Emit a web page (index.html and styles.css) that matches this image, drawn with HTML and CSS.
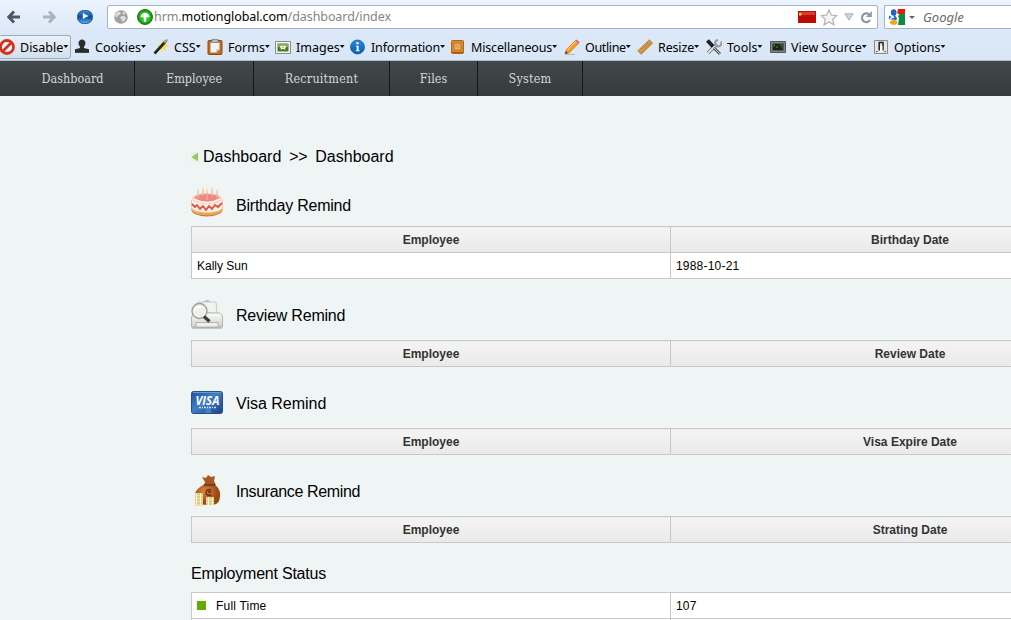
FILE: index.html
```html
<!DOCTYPE html>
<html lang="en">
<head>
<meta charset="utf-8">
<title>Dashboard</title>
<link rel="stylesheet" href="styles.css">
</head>
<body>
<svg class="defs" width="0" height="0">
  <defs>
    <linearGradient id="blue" x2="0" y2="1"><stop offset="0" stop-color="#3d8ed8"/><stop offset=".5" stop-color="#0d4c9b"/><stop offset="1" stop-color="#56b4f0"/></linearGradient>
    <linearGradient id="info" x2="0" y2="1"><stop offset="0" stop-color="#2d8be0"/><stop offset="1" stop-color="#0859b0"/></linearGradient>
    <radialGradient id="green"><stop offset="0" stop-color="#5fe04f"/><stop offset=".7" stop-color="#22b81a"/><stop offset="1" stop-color="#14800f"/></radialGradient>
    <linearGradient id="card" x2="1" y2="1"><stop offset="0" stop-color="#254f9b"/><stop offset=".45" stop-color="#3c80c8"/><stop offset="1" stop-color="#203f88"/></linearGradient>
    <linearGradient id="paper" x2="0" y2="1"><stop offset="0" stop-color="#fdfdfb"/><stop offset="1" stop-color="#cfcfca"/></linearGradient>
    <radialGradient id="bag" cx=".4" cy=".35"><stop offset="0" stop-color="#d9873e"/><stop offset="1" stop-color="#9c4a14"/></radialGradient>
    <linearGradient id="wood" x2="1" y2="1"><stop offset="0" stop-color="#efb566"/><stop offset="1" stop-color="#bd7427"/></linearGradient>
  </defs>
</svg>

<header class="browser">
  <div class="address-row">
    <div class="buttons">
      <svg width="14" height="14" viewBox="0 0 14 14"><path d="M7 1.5 1.8 7 7 12.5M2.5 7H13" fill="none" stroke="#4b5868" stroke-width="3"/></svg>
      <svg width="14" height="14" viewBox="0 0 14 14"><path d="M7 1.5 12.2 7 7 12.5M11.5 7H1" fill="none" stroke="#a9b4c0" stroke-width="3"/></svg>
      <svg width="16" height="14" viewBox="0 0 16 14"><rect x=".5" y=".5" width="15" height="13" rx="6" fill="url(#blue)" stroke="#275f9f"/><path d="M5.8 3 11.5 6 5.8 9z" fill="#fff"/></svg>
    </div>
    <div class="url-box">
      <svg width="14" height="14" viewBox="0 0 14 14"><circle cx="7" cy="7" r="6.8" fill="#a0a0a0"/><path d="M2 3 5 1.5 7 3 5.5 5 3.5 5.5 3 8 1 6zM7 6.5l3-.8 2 2-1.5 3L8 12l-.5-3-1.8-1zM9 1.5l3 2-2 1.3-1.5-1z" fill="#dedede"/></svg>
      <svg class="secure" width="16" height="16" viewBox="0 0 16 16"><circle cx="8" cy="8" r="7.5" fill="url(#green)" stroke="#168014"/><path d="M3.5 8.3a4.5 4.5 0 0 1 9 0H9.2v4.4H6.8V8.3z" fill="#fff"/></svg>
      <p class="url">hrm.<b>motionglobal.com</b>/dashboard/index</p>
      <svg class="flag" width="18" height="12" viewBox="0 0 18 12"><path fill="#bd0b08" d="M0 0h18v12H0z"/><path fill="#dc3d33" d="M1 1h16v3H1z"/><path fill="#ffd21f" d="M1 2h2.5v2.5H1z"/></svg>
      <svg class="star" width="18" height="17" viewBox="0 0 18 17"><path d="m9 1 2.3 5 5.5.6-4.1 3.7 1.2 5.5L9 13l-4.9 2.8 1.2-5.5L1.2 6.6 6.7 6z" fill="#f5f5f5" stroke="#b1b1b1" stroke-width="1.2"/></svg>
      <svg class="caret" width="10" height="8" viewBox="0 0 10 8"><path d="M.8.8h8.4L5 7.2z" fill="#cdd6df" stroke="#a5b1bd"/></svg>
      <svg width="12" height="13" viewBox="0 0 12 13"><path d="M10 9.2A4.4 4.4 0 1 1 9 3.2" fill="none" stroke="#8b97a5" stroke-width="2.2"/><path d="M11.8 0v6H6z" fill="#8b97a5"/></svg>
    </div>
    <div class="search-box">
      <svg width="16" height="16" viewBox="0 0 16 16"><path fill="#e5190f" d="M8 0h8v5l-5 1-3-2z"/><path fill="#078e3e" d="M8 16V8l3-3 5-.5V16z"/><path fill="#fff" d="M0 0h9L8 5l2 4-1 7H0z"/><ellipse cx="4.7" cy="3.5" rx="2.8" ry="3.2" fill="#1c62c9"/><path d="M5 6.5 6.5 9" stroke="#1c62c9" stroke-width="2"/><path d="M0 6.500 4.500 9 8 8.500 7.500 11 3 10.500 0 10z" fill="#1c62c9"/><path d="M1 9.500 5 7.800" stroke="#fff" stroke-width="1.300"/><ellipse cx="4.700" cy="13.400" rx="3.600" ry="2.300" fill="#f3a60f"/></svg>
      <svg class="mini" width="6" height="3" viewBox="0 0 6 3"><path d="M0 0h6L3 3z" fill="#666"/></svg>
      <span class="hint">Google</span>
    </div>
  </div>

  <div class="devbar">
    <div class="tool pressed"><svg viewBox="0 0 16 16"><circle cx="8" cy="8" r="6.500" fill="#fff" stroke="#d5321c" stroke-width="2.800"/><path d="m4 12 8-8" stroke="#d5321c" stroke-width="2.800"/></svg><span>Disable</span><i></i></div>
    <div class="tool"><svg viewBox="0 0 16 16"><path d="M8 .5a3.600 3.600 0 0 1 3.500 3.900C11.500 6.500 9.800 7 9.800 9l5.200 1.300V13H1v-2.700L6.200 9c0-2-1.700-2.500-1.700-4.600A3.600 3.600 0 0 1 8 .5z" fill="#2c2c2c"/><path d="M1 13.500h14" stroke="#444"/></svg><span>Cookies</span><i></i></div>
    <div class="tool"><svg viewBox="0 0 16 16"><path d="m9 0 1.500 3L14 2l-1 3.500 3 2-3.500 1 .5 3.500L10 10l-3 2 .5-4L4 6l4-1z" fill="#f9dc54"/><path d="M1.500 14.500 12.500 2.500" stroke="#242424" stroke-width="2.600"/><path d="m11 4 3.500-3.500" stroke="#999" stroke-width="2"/></svg><span>CSS</span><i></i></div>
    <div class="tool"><svg viewBox="0 0 16 16"><rect x="1" y="1.500" width="14" height="14" rx="1" fill="#bd6a23" stroke="#8f4c14"/><path d="M3.500 3.500h9v7l-3 3h-6z" fill="#f0f2f5"/><path d="M12.500 10.500h-3v3z" fill="#a8b2bf"/><rect x="5" y=".5" width="6" height="3" fill="#b9bdc2" stroke="#777" stroke-width=".7"/></svg><span>Forms</span><i></i></div>
    <div class="tool"><svg viewBox="0 0 16 16"><path d="M.5 2.500h15v12H.5z" fill="#f7f7f3" stroke="#8b8b86"/><path d="M2.500 4.500h11v8h-11z" fill="#447c28"/><path d="M3 5h10v3H3z" fill="#83ae5c"/><path d="m4.500 8 2-1.500 1.500.500 1.500-.500 2 1.500-1.500 1 .5 1.500-2.500-.500-2.500.500.500-1.500z" fill="#fff"/><circle cx="8" cy="8.500" r="1.100" fill="#e3c02a"/></svg><span>Images</span><i></i></div>
    <div class="tool"><svg viewBox="0 0 16 16"><circle cx="7.500" cy="8" r="7" fill="url(#info)" stroke="#0755a5" stroke-width=".7"/><circle cx="7.500" cy="4.300" r="1.200" fill="#fff"/><path d="M6 6.800h2.600v4.400h1v1H5.800v-1h1V7.700H6z" fill="#fff"/></svg><span class="snug">Information</span><i></i></div>
    <div class="tool"><svg viewBox="0 0 16 16"><rect x="1.500" y="1.500" width="12" height="13" rx="1" fill="#dc8a31" stroke="#b56519"/><path d="M4 4h7v7H4z" fill="#edb15d" stroke="#b56a24" stroke-width=".8"/><path d="M5.500 6h4M5.500 8h4" stroke="#cf8b40" stroke-width=".7"/><path d="M1.500 13.500h12" stroke="#9e5817"/></svg><span class="snug">Miscellaneous</span><i></i></div>
    <div class="tool"><svg viewBox="0 0 16 16"><path d="M1 15.500h10" stroke="#b8b8b8"/><path d="m1 15 1-4L11.500 1.500l3 3L5 14z" fill="#f49b22" stroke="#c66c17" stroke-width=".6"/><path d="M3 11.500 12 2.500" stroke="#ffd779"/><path d="m11.500 1.500 1.300-1 3 3-1.300 1z" fill="#e16670"/><path d="m1 15 1-3 2 2z" fill="#543c2c"/></svg><span class="tight">Outline</span><i></i></div>
    <div class="tool"><svg viewBox="0 0 16 16"><path d="m.7 11.800 11.800-11 3 3.500L4.200 15.300z" fill="url(#wood)" stroke="#ac6926" stroke-width=".7"/><path d="m4 9 1.200 1.300M6 7.300l1.200 1.300M8 5.500l1.200 1.400M10 3.800l1.200 1.400" stroke="#8f571e" stroke-width=".6"/></svg><span class="snug">Resize</span><i></i></div>
    <div class="tool"><svg viewBox="0 0 16 16"><path d="m2 14 9-9" stroke="#777" stroke-width="3.600"/><path d="m2 14 9-9" stroke="#ddd" stroke-width="2"/><path d="M15 2.500a3.200 3.200 0 1 1-3-1.500" fill="none" stroke="#999" stroke-width="2"/><path d="m1.500 1.500 5.500 6" stroke="#222" stroke-width="4"/><path d="m8 9 6 6" stroke="#555" stroke-width="2.800"/><path d="m8 9 6 6" stroke="#ccc"/></svg><span>Tools</span><i></i></div>
    <div class="tool"><svg viewBox="0 0 16 16"><path d="M.5 2.500h15v11H.5z" fill="#858585" stroke="#555"/><path d="M2.500 4.500h11v7h-11z" fill="#192519"/><path d="m3.500 5.500 1.500 1-1.500 1M6 8h2" fill="none" stroke="#54c53a" stroke-width=".8"/><path d="M9 5h4v6z" fill="#3a4f39"/></svg><span>View Source</span><i></i></div>
    <div class="tool"><svg viewBox="0 0 16 16"><path d="M1.500 1.500h13v13h-13z" fill="#e5e5e5" stroke="#888"/><path d="M6.200 11.500v-8h3.800v8" fill="none" stroke="#222" stroke-width="1.500"/><path d="M7 7h2.400v6H7z" fill="#fff"/><path d="M3 12.500h1.500M11.500 12.500H13" stroke="#555"/></svg><span>Options</span><i></i></div>
  </div>
</header>

<nav class="menu">
  <a>Dashboard</a><a>Employee</a><a>Recruitment</a><a>Files</a><a>System</a>
</nav>

<main class="page">
  <div class="crumbs"><svg width="8" height="10" viewBox="0 0 8 10"><path d="M0 0h8v10H0z" fill="#e9f0e8"/><path d="M7 .8v8.400L.3 5z" fill="#91cb5c"/></svg><span>Dashboard</span><span class="sep">&gt;&gt;</span><span>Dashboard</span></div>

  <section>
    <h2 class="head first">
      <svg viewBox="0 0 32 32"><ellipse cx="16" cy="24" rx="15.500" ry="6.500" fill="#c77b2f"/><path d="M.5 14h31v10c-2 7-29 7-31 0z" fill="#e9a55a"/><path d="M1 13h30v9c-2 6-28 6-30 0z" fill="#fff0e5"/><path d="m1 18 3 3 2-2 3 4 3-3 3 4 3-4 3 3 3-4 3 2 4-4" fill="none" stroke="#e0533d" stroke-width="1.800"/><ellipse cx="16" cy="12.500" rx="15" ry="5.800" fill="#fbd0c6"/><ellipse cx="16" cy="12" rx="12.500" ry="4" fill="#ee8980"/><path d="M3 13q13 7 26 0" fill="none" stroke="#fff5ef" stroke-width="1.500"/><path d="M7 12V4M12 10V3M16 14V5M21 10V3M26 12V5" stroke="#e9b8a4" stroke-width="1.200"/><path d="M7 4V2M12 3V1M16 5V2M21 3V1M26 5V3" stroke="#ffe3a1" stroke-width="1.500"/></svg>
      <span class="close">Birthday Remind</span></h2>
    <table><tr><th>Employee</th><th>Birthday Date</th></tr><tr><td>Kally Sun</td><td class="date">1988-10-21</td></tr></table>
  </section>

  <section>
    <h2 class="head">
      <svg viewBox="0 0 32 32"><path d="M12 3q4-4 8 0" fill="#8fc7ee"/><path d="M7 3h18l1 11H6z" fill="#f3f3ef" stroke="#c8c9c4"/><path d="M4 14h24q3 0 3.500 5v9H.5v-9q0-4 3.500-5z" fill="url(#paper)" stroke="#b4b5b0"/><path d="M5 23.500h22v4.500H5z" fill="#efefeb" stroke="#b4b5b0"/><path d="M1 29h30" stroke="#9a9b96"/><circle cx="8.500" cy="12" r="7.500" fill="#edf0ed" fill-opacity=".9" stroke="#999c98" stroke-width="1.300"/><path d="M4 11q2-4 6-3" fill="none" stroke="#fff" stroke-width="2"/><path d="m13 17.500 5.500 5" stroke="#3d3f3e" stroke-width="3.400"/></svg>
      <span class="close">Review Remind</span></h2>
    <table><tr><th>Employee</th><th>Review Date</th></tr></table>
  </section>

  <section>
    <h2 class="head">
      <svg viewBox="0 0 32 32"><rect x=".5" y="4.500" width="31" height="22" rx="2" fill="url(#card)" stroke="#274c86"/><path d="M2 5.500h28" stroke="#6b9cd0"/><path d="m14 26 3-10 4 10z" fill="#5a9fdc" opacity=".5"/><text class="visa" x="4.500" y="17.500" textLength="24">VISA</text><path d="M8 20.500h17" stroke="#d5e3f4" stroke-width="1.300" stroke-dasharray="2 1 1 1"/></svg>
      <span>Visa Remind</span></h2>
    <table><tr><th>Employee</th><th>Visa Expire Date</th></tr></table>
  </section>

  <section>
    <h2 class="head">
      <svg viewBox="0 0 32 32"><path d="m11 2 4 1 2-3 3 2 4-1-1 5 2 4H13l1-3z" fill="#a75724"/><path d="M14 9h9c4 3 7 7 6 13-1 8-5 8-13 8S3 27 4 19c1-5 6-8 10-10z" fill="url(#bag)"/><path d="M13 10h11" stroke="#70310f" stroke-width="1.500"/><path d="M20 15q-5-1-5 2.500t5 2.500M17 17h3" fill="none" stroke="#612d14" stroke-width="1.500"/><path d="M4 18h8v13H4zM15 22h8v8h-8z" fill="#f2dda0"/><path d="M4 19h8m-8 3h8m-8 3h8m-8 3h8m3-5h8m-8 3h8m-8 3h8" stroke="#cdab58" stroke-width=".8"/><path d="M5.500 18v12m4-12v12m8-8v8m4-8v8" stroke="#fff6cf"/></svg>
      <span class="closer">Insurance Remind</span></h2>
    <table><tr><th>Employee</th><th>Strating Date</th></tr></table>
  </section>

  <section>
    <h2 class="head plain"><span class="close">Employment Status</span></h2>
    <table><tr><td><b class="dot"></b><span class="wide">Full Time</span></td><td class="date">107</td></tr><tr><td></td><td></td></tr></table>
  </section>
</main>
</body>
</html>
```

FILE: styles.css
```css
* { box-sizing: border-box; }
html, body { margin: 0; height: 620px; overflow: hidden; }
body { background: #eff5f5; font-family: "Liberation Sans", Arial, sans-serif; color: #000; }
.defs { position: absolute; }
svg { display: block; flex: none; }
p, h2 { margin: 0; font-weight: normal; }

/* browser chrome */
.browser { height: 61px; background: linear-gradient(#ecf4fe, #dbe8f7 55%, #d9e7f6); border-bottom: 1px solid #a9bcd0; font-family: "Noto Sans", "Open Sans", sans-serif; overflow: hidden; }
.address-row { display: flex; height: 34px; padding-top: 5px; }
.buttons { display: flex; flex: none; gap: 21px; width: 107px; padding: 5px 0 0 7px; }
.url-box, .search-box { display: flex; align-items: center; height: 24px; background: #fff; border: 1px solid #a5b5c8; border-radius: 2px; }
.url-box { flex: none; width: 771px; padding: 0 5px 0 6px; }
.secure { margin-left: 9px; }
.url { flex: 1; padding-left: 1px; font-size: 12.5px; line-height: 20px; letter-spacing: -.08px; color: #858585; white-space: nowrap; }
.url b { font-weight: normal; color: #000; }
.flag { margin-right: 4px; }
.star { margin-right: 6px; }
.caret { margin-right: 6px; }
.search-box { flex: 1; margin-left: 6px; padding-left: 4px; border-right: 0; border-radius: 2px 0 0 2px; }
.mini { margin-left: 4px; }
.hint { margin-left: 8px; font-size: 13px; font-style: italic; color: #6b6b6b; }

.devbar { display: grid; grid-template-columns: 75px 79px 54px 68px 75px 100px 114px 73px 69px 64px 103px 80px; height: 26px; margin-top: 1px; margin-left: -1px; }
.tool { display: flex; align-items: center; height: 24px; font-size: 12.5px; color: #000; white-space: nowrap; }
.tool svg { width: 16px; height: 16px; margin-right: 5px; }
.pressed { width: 72px; border: 1px solid #9eabbb; border-left: 0; border-radius: 3px; background: linear-gradient(#eaf1f9, #d3dfed); }
.tool i { width: 5px; height: 3px; margin-top: -1px; background: #111; clip-path: polygon(0 0, 100% 0, 50% 100%); }
.snug { letter-spacing: -.15px; }
.tight { letter-spacing: -.35px; }

/* main menu */
.menu { display: flex; height: 35px; background: linear-gradient(#43484a, #353a3c); font-family: "DejaVu Serif Condensed", "DejaVu Serif", serif; font-size: 12.5px; color: #d6d6d4; }
.menu a { line-height: 36px; text-align: center; border-right: 1px solid #15181a; }
.menu a:nth-child(1) { width: 135px; padding-left: 11px; }
.menu a:nth-child(2) { width: 119px; }
.menu a:nth-child(3) { width: 136px; letter-spacing: .2px; }
.menu a:nth-child(4) { width: 88px; }
.menu a:nth-child(5) { width: 105px; letter-spacing: .2px; }

/* content */
.page { height: 524px; padding: 50px 0 0 191px; overflow: hidden; }
.crumbs { display: flex; align-items: center; height: 21px; font-size: 16px; }
.crumbs svg { margin-right: 4px; }
.sep { width: 34px; padding-left: 8px; letter-spacing: -.5px; }
.head { display: flex; align-items: center; height: 61px; padding-top: 11px; font-size: 16px; }
.head span { padding-top: 2px; }
.head svg { width: 32px; height: 32px; margin-right: 13px; }
.first { height: 59px; padding-top: 17px; }
.first svg { margin-top: -6px; }
.plain { height: 49px; }
.close { letter-spacing: -.22px; }
.closer { letter-spacing: -.36px; }
.visa { font: italic bold 11.5px "Open Sans", sans-serif; fill: #fff; }
table { width: 959px; table-layout: fixed; border-collapse: collapse; font-size: 12px; }
th, td { height: 26px; padding: 0 5px; border: 1px solid #c8c8c8; }
th { color: #333; background: linear-gradient(#f4f4f4, #e9e9e9); }
td { background: #fff; }
.date { letter-spacing: .2px; }
.wide { letter-spacing: .2px; }
.dot { display: inline-block; width: 9px; height: 9px; margin-right: 10px; background: #62ab00; }
```
